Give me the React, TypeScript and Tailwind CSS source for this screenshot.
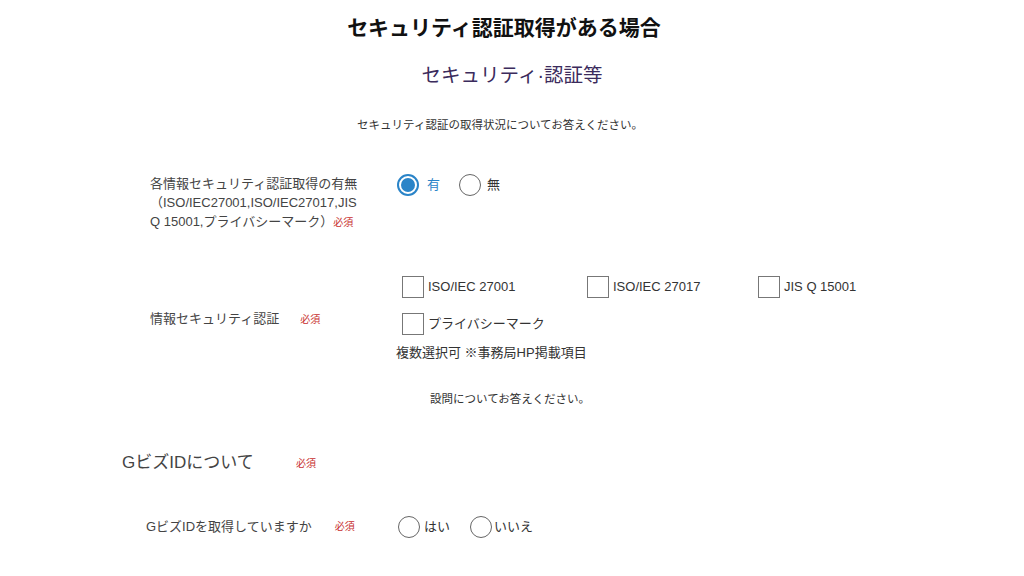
import React from 'react';

const Required: React.FC<{ className?: string }> = ({ className = '' }) => (
  <span className={`text-[10px] text-[#c8302f] ${className}`}>必須</span>
);

const Radio: React.FC<{ label: string; checked?: boolean; gap?: string }> = ({ label, checked, gap = 'ml-[8px]' }) => (
  <label className="flex items-center">
    {checked ? (
      <span className="flex h-[22px] w-[22px] items-center justify-center rounded-full border-2 border-[#2a84c8]">
        <span className="h-[14px] w-[14px] rounded-full bg-[#2a84c8]" />
      </span>
    ) : (
      <span className="h-[22px] w-[22px] rounded-full border-[1.5px] border-[#666]" />
    )}
    <span className={`${gap} text-[13px] ${checked ? 'text-[#2a84c8]' : 'text-[#333]'}`}>{label}</span>
  </label>
);

const Check: React.FC<{ label: string; className?: string }> = ({ label, className = '' }) => (
  <label className={`flex items-center ${className}`}>
    <span className="h-[22px] w-[22px] border border-[#777] bg-white" />
    <span className="ml-[4px] text-[13px] text-[#333]">{label}</span>
  </label>
);

export default function App() {
  return (
    <div
      className="min-h-[576px] w-[1024px] bg-white text-[#444]"
      style={{ fontFamily: '"Liberation Sans", "Noto Sans CJK JP", sans-serif' }}
    >
      <h1 className="pr-[16px] pt-[14px] text-center text-[21px] font-bold leading-[28px] text-[#111]">
        セキュリティ認証取得がある場合
      </h1>
      <h2 className="mt-[20px] text-center text-[19.5px] leading-[26px] text-[#3b2b5c]">
        セキュリティ·認証等
      </h2>
      <p className="mt-[27px] pr-[24px] text-center text-[11.5px] leading-[20px] text-[#333]">
        セキュリティ認証の取得状況についてお答えください。
      </p>

      {/* 認証取得の有無 */}
      <div className="mt-[39px] flex items-start pl-[150px]">
        <div className="w-[247px] text-[13px] leading-[19px] text-[#444]">
          各情報セキュリティ認証取得の有無
          <br />
          （ISO/IEC27001,ISO/IEC27017,JIS
          <br />
          Q 15001,プライバシーマーク）
          <Required />
        </div>
        <div className="flex items-center gap-[19px]">
          <Radio label="有" checked />
          <Radio label="無" gap="ml-[6px]" />
        </div>
      </div>

      {/* 情報セキュリティ認証 */}
      <div className="mt-[44px] flex items-center pl-[150px]">
        <div className="flex w-[246px] items-center text-[13px] text-[#444]">
          情報セキュリティ認証
          <Required className="ml-[21px]" />
        </div>
        <div className="flex flex-col">
          <div className="flex pl-[6px]">
            <Check label="ISO/IEC 27001" className="w-[185px]" />
            <Check label="ISO/IEC 27017" className="w-[171px]" />
            <Check label="JIS Q 15001" />
          </div>
          <div className="mt-[15px] flex pl-[6px]">
            <Check label="プライバシーマーク" />
          </div>
          <p className="mt-[9px] text-[13px] leading-[18px] text-[#333]">複数選択可 ※事務局HP掲載項目</p>
        </div>
      </div>

      <p className="mt-[27px] w-[1020px] text-center text-[11.5px] leading-[20px] text-[#333]">
        設問についてお答えください。
      </p>

      {/* GビズID */}
      <div className="mt-[42px] flex items-center pl-[122px]">
        <span className="w-[174px] text-[17px] leading-[24px] text-[#444]">GビズIDについて</span>
        <Required />
      </div>

      <div className="mt-[41px] flex items-center pl-[146px]">
        <div className="flex w-[252px] items-center text-[13px] leading-[22px] text-[#444]">
          GビズIDを取得していますか
          <Required className="ml-[23px]" />
        </div>
        <div className="flex items-center gap-[20px]">
          <Radio label="はい" gap="ml-[4px]" />
          <Radio label="いいえ" gap="ml-[2px]" />
        </div>
      </div>
    </div>
  );
}
